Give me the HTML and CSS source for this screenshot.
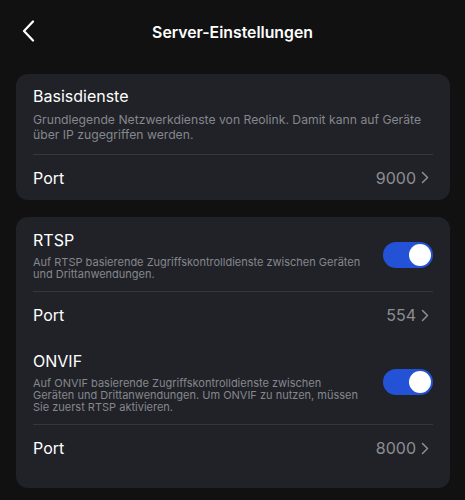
FILE: index.html
```html
<!DOCTYPE html>
<html lang="de">

<head>
  <meta charset="UTF-8">
  <meta name="viewport" content="width=device-width, initial-scale=1.0">
  <title>Server-Einstellungen</title>
  <link rel="stylesheet" href="styles.css">
</head>

<body>

  <div class="topbar">
    <span class="back">
      <svg width="13" height="22" viewBox="0 0 13 22">
        <path d="M11 1.5 L2 11 L11 20.5" fill="none" stroke="#fff" stroke-width="2.2" stroke-linecap="round" stroke-linejoin="round" />
      </svg>
    </span>
    <h1>Server-Einstellungen</h1>
  </div>

  <div class="card">
    <div class="section">
      <div class="text">
        <h2>Basisdienste</h2>
        <p class="desc big">Grundlegende Netzwerkdienste von Reolink. Damit kann auf Geräte über IP zugegriffen werden.</p>
      </div>
    </div>
    <div class="row">
      <span>Port</span>
      <span class="value">9000
        <svg width="8" height="13" viewBox="0 0 8 13"><path d="M1.5 1.5 L6.5 6.5 L1.5 11.5" fill="none" stroke="#8d8e92" stroke-width="1.5" stroke-linecap="round" stroke-linejoin="round" /></svg>
      </span>
    </div>
  </div>

  <div class="card card-last">
    <div class="section toggle-section">
      <div class="text">
        <h2>RTSP</h2>
        <p class="desc">Auf RTSP basierende Zugriffskontrolldienste zwischen Geräten und Drittanwendungen.</p>
      </div>
      <div class="switch on"><span class="knob"></span></div>
    </div>
    <div class="row">
      <span>Port</span>
      <span class="value">554
        <svg width="8" height="13" viewBox="0 0 8 13"><path d="M1.5 1.5 L6.5 6.5 L1.5 11.5" fill="none" stroke="#8d8e92" stroke-width="1.5" stroke-linecap="round" stroke-linejoin="round" /></svg>
      </span>
    </div>
    <div class="section toggle-section">
      <div class="text">
        <h2>ONVIF</h2>
        <p class="desc">Auf ONVIF basierende Zugriffskontrolldienste zwischen Geräten und Drittanwendungen. Um ONVIF zu nutzen, müssen Sie zuerst RTSP aktivieren.</p>
      </div>
      <div class="switch on"><span class="knob"></span></div>
    </div>
    <div class="row">
      <span>Port</span>
      <span class="value">8000
        <svg width="8" height="13" viewBox="0 0 8 13"><path d="M1.5 1.5 L6.5 6.5 L1.5 11.5" fill="none" stroke="#8d8e92" stroke-width="1.5" stroke-linecap="round" stroke-linejoin="round" /></svg>
      </span>
    </div>
  </div>

</body>

</html>
```

FILE: styles.css
```css
body {
  margin: 0;
  background: #111112;
  color: #fff;
  font-family: Inter, "Noto Sans", sans-serif;
}

.topbar {
  height: 64px;
  display: flex;
  align-items: center;
  justify-content: center;
  position: relative;
}

.back {
  position: absolute;
  left: 22px;
  top: 20px;
  line-height: 0;
}

h1 {
  margin: 1px 0 0;
  font-size: 15.8px;
  font-weight: 600;
}

.card {
  margin: 10px 15px 0 16px;
  background: #202228;
  border-radius: 12px;
  padding: 0 17px;
}

.card + .card {
  margin-top: 17px;
}

.card-last {
  padding-bottom: 17px;
}

.section {
  display: flex;
  align-items: center;
  padding: 12px 0 12px;
  border-bottom: 1px solid #35373c;
}

.toggle-section {
  padding: 13px 0 11px;
}

.text {
  flex: 1;
}

h2 {
  margin: 0 0 6px;
  font-size: 16px;
  font-weight: 400;
  line-height: 20px;
}

.desc {
  margin: 0;
  font-size: 11px;
  line-height: 12px;
  color: #85878c;
  max-width: 331px;
}

.desc.big {
  font-size: 12.2px;
  line-height: 15px;
  max-width: none;
}

.row {
  display: flex;
  align-items: center;
  justify-content: space-between;
  height: 45px;
  font-size: 16px;
}

.card-last .row {
  height: 46px;
}

.value {
  display: flex;
  align-items: center;
  gap: 5px;
  color: #8d8e92;
  padding-right: 4px;
}

.switch {
  width: 50px;
  height: 26px;
  border-radius: 13px;
  background: #2352d6;
  position: relative;
  margin-left: 16px;
}

.knob {
  position: absolute;
  top: 2px;
  right: 2px;
  width: 22px;
  height: 22px;
  border-radius: 50%;
  background: #fff;
}
```
